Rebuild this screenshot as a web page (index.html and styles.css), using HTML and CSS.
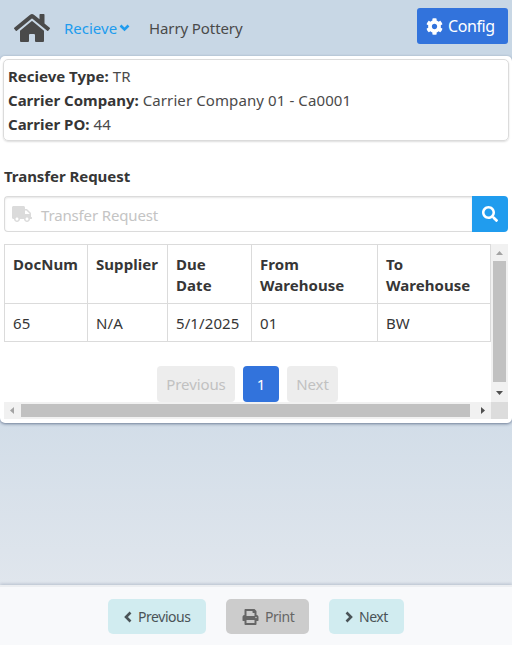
FILE: index.html
```html
<!DOCTYPE html>
<html lang="en">
<head>
<meta charset="utf-8">
<title>Recieve</title>
<link rel="stylesheet" href="styles.css">
</head>
<body>
<header class="navbar">
  <svg class="home" viewBox="0 0 576 512"><path d="M280.37 148.26L96 300.11V464a16 16 0 0 0 16 16l112.06-.29a16 16 0 0 0 15.92-16V368a16 16 0 0 1 16-16h64a16 16 0 0 1 16 16v95.64a16 16 0 0 0 16 16.05L464 480a16 16 0 0 0 16-16V300L295.67 148.26a12.19 12.19 0 0 0-15.3 0zM571.6 251.47L488 182.56V44.05a12 12 0 0 0-12-12h-56a12 12 0 0 0-12 12v72.61L318.47 43a48 48 0 0 0-61 0L4.34 251.47a12 12 0 0 0-1.6 16.9l25.5 31A12 12 0 0 0 45.15 301l235.22-193.74a12.19 12.19 0 0 1 15.3 0L530.9 301a12 12 0 0 0 16.9-1.6l25.5-31a12 12 0 0 0-1.7-16.93z"/></svg>
  <a class="menu"><span>Recieve</span><svg class="caret" viewBox="0 0 11 8"><path d="M1.5 1.5l4 4 4-4"/></svg></a>
  <span class="user">Harry Pottery</span>
  <button class="config"><svg viewBox="0 0 512 512"><path d="M487.4 315.7l-42.6-24.6c4.3-23.2 4.3-47 0-70.2l42.6-24.6c4.9-2.8 7.1-8.6 5.5-14-11.1-35.6-30-67.8-54.7-94.6-3.8-4.1-10-5.1-14.8-2.3L380.8 110c-17.9-15.4-38.5-27.3-60.8-35.1V25.8c0-5.6-3.9-10.5-9.4-11.7-36.7-8.2-74.3-7.8-109.2 0-5.5 1.2-9.4 6.1-9.4 11.7V75c-22.2 7.9-42.8 19.8-60.8 35.1L88.7 85.5c-4.9-2.8-11-1.9-14.8 2.3-24.7 26.7-43.6 58.9-54.7 94.6-1.7 5.4.6 11.2 5.5 14L67.3 221c-4.3 23.2-4.3 47 0 70.2l-42.6 24.6c-4.9 2.8-7.1 8.6-5.5 14 11.1 35.6 30 67.8 54.7 94.6 3.8 4.1 10 5.1 14.8 2.3l42.6-24.6c17.9 15.4 38.5 27.3 60.8 35.1v49.2c0 5.6 3.9 10.5 9.4 11.7 36.7 8.2 74.3 7.8 109.2 0 5.5-1.2 9.4-6.1 9.4-11.7v-49.2c22.2-7.9 42.8-19.8 60.8-35.1l42.6 24.6c4.9 2.8 11 1.9 14.8-2.3 24.7-26.7 43.6-58.9 54.7-94.6 1.5-5.5-.7-11.3-5.6-14.1zM256 336c-44.1 0-80-35.9-80-80s35.9-80 80-80 80 35.9 80 80-35.9 80-80 80z"/></svg><span>Config</span></button>
</header>
<main class="panel">
  <section class="info">
    <div><b>Recieve Type:</b> <span>TR</span></div>
    <div><b>Carrier Company:</b> <span>Carrier Company 01 - Ca0001</span></div>
    <div><b>Carrier PO:</b> <span>44</span></div>
  </section>
  <h2 class="label">Transfer Request</h2>
  <div class="search">
    <div class="field"><svg viewBox="0 0 640 512"><path d="M624 352h-16V243.9c0-12.7-5.1-24.9-14.1-33.9L494 110.1c-9-9-21.2-14.1-33.9-14.1H416V48c0-26.5-21.5-48-48-48H48C21.5 0 0 21.5 0 48v320c0 26.5 21.5 48 48 48h16c0 53 43 96 96 96s96-43 96-96h128c0 53 43 96 96 96s96-43 96-96h48c8.8 0 16-7.2 16-16v-32c0-8.8-7.2-16-16-16zM160 464c-26.5 0-48-21.5-48-48s21.5-48 48-48 48 21.5 48 48-21.5 48-48 48zm320 0c-26.5 0-48-21.5-48-48s21.5-48 48-48 48 21.5 48 48-21.5 48-48 48zm80-208H416V144h44.1l99.9 99.9V256z"/></svg><span>Transfer Request</span></div>
    <button class="go"><svg viewBox="0 0 512 512"><path d="M505 442.7L405.3 343c-4.5-4.5-10.6-7-17-7H372c27.6-35.3 44-79.7 44-128C416 93.1 322.9 0 208 0S0 93.1 0 208s93.1 208 208 208c48.3 0 92.7-16.4 128-44v16.3c0 6.4 2.5 12.5 7 17l99.7 99.7c9.4 9.4 24.6 9.4 33.9 0l28.3-28.3c9.4-9.4 9.4-24.6.1-34zM208 336c-70.7 0-128-57.2-128-128 0-70.7 57.2-128 128-128 70.7 0 128 57.2 128 128 0 70.7-57.2 128-128 128z"/></svg></button>
  </div>
  <div class="scroller">
    <div class="content">
      <table>
        <colgroup><col class="c1"><col class="c2"><col class="c3"><col class="c4"><col class="c5"></colgroup>
        <thead><tr><th>DocNum</th><th>Supplier</th><th>Due<br>Date</th><th>From<br>Warehouse</th><th>To<br>Warehouse</th></tr></thead>
        <tbody><tr><td>65</td><td>N/A</td><td>5/1/2025</td><td>01</td><td>BW</td></tr></tbody>
      </table>
      <nav class="pages"><span class="page prev">Previous</span><span class="page current">1</span><span class="page next">Next</span></nav>
    </div>
    <div class="vbar"><svg viewBox="0 0 17 17"><path class="dim" d="M5 11l3.5-4 3.5 4z"/></svg><i></i><svg viewBox="0 0 17 17"><path d="M5 6h7L8.500 10z"/></svg></div>
    <div class="hbar"><svg viewBox="0 0 17 17"><path class="dim" d="M10 5v7L6 8.500z"/></svg><i></i><svg viewBox="0 0 17 17"><path d="M7 5v7l4-3.500z"/></svg></div>
    <div class="corner"></div>
  </div>
</main>
<footer class="footer">
  <button class="step back"><svg class="chev" viewBox="0 0 8 12"><path d="M6.500 1.500L2 6l4.500 4.500"/></svg><span>Previous</span></button>
  <button class="step print"><svg class="printer" viewBox="0 0 512 512"><path d="M448 192V77.250c0-8.490-3.370-16.620-9.370-22.630L393.370 9.370c-6-6-14.140-9.370-22.630-9.370H96C78.330 0 64 14.330 64 32v160c-35.350 0-64 28.650-64 64v112c0 8.840 7.160 16 16 16h48v96c0 17.670 14.330 32 32 32h320c17.670 0 32-14.330 32-32v-96h48c8.840 0 16-7.160 16-16V256c0-35.350-28.650-64-64-64zm-64 256H128v-96h256v96zm0-224H128V64h192v48c0 8.840 7.160 16 16 16h48v96zm48 72c-13.250 0-24-10.750-24-24 0-13.260 10.750-24 24-24s24 10.740 24 24c0 13.250-10.750 24-24 24z"/></svg><span>Print</span></button>
  <button class="step forward"><svg class="chev" viewBox="0 0 8 12"><path d="M1.500 1.500L6 6l-4.500 4.500"/></svg><span>Next</span></button>
</footer>
</body>
</html>
```
FILE: styles.css
```css
* { box-sizing: border-box; }
html, body { height: 100%; }
body {
  margin: 0;
  display: flex;
  flex-direction: column;
  font: 15px/24px "Noto Sans", sans-serif;
  letter-spacing: -0.1px;
  color: #4a4a4a;
  background: linear-gradient(#c8d7e5, #c8d7e5 56px, #d2dde8 423px, #e0e6ed 585px);
  overflow: hidden;
}
svg { display: block; flex: none; fill: currentColor; }
button { font: inherit; letter-spacing: inherit; border: 0; padding: 0; display: flex; align-items: center; }
b, th, h2 { color: #363636; font-weight: 700; }

.navbar { height: 56px; flex: none; display: flex; align-items: center; padding: 0 4px 0 14px; background: #c8d7e5; }
.home { width: 36px; height: 32px; margin-right: 14px; }
.menu { display: flex; align-items: center; color: #209cee; width: 85px; gap: 2px; }
.menu span { letter-spacing: 0; }
.caret { width: 11px; height: 8px; }
.caret path, .chev path { fill: none; stroke: currentColor; stroke-width: 2.600; }
.config { width: 91px; height: 36px; margin: -4px 0 0 auto; padding-left: 9px; gap: 5px; border-radius: 3px; background: #3273dc; color: #fff; font-size: 16px; letter-spacing: -0.4px; }
.config svg { width: 17px; height: 17px; }

.panel { height: 367px; flex: none; padding: 3px 4px 4px; border-radius: 5px; background: #fff; box-shadow: 0 1px 3px #0a1e4680; }
.info { height: 82px; padding: 4px 4px; margin: 0 -1px; border: 1px solid #dbdbdb; border-radius: 5px; box-shadow: 0 1px 2px #0002; letter-spacing: 0.1px; }
.info b { letter-spacing: 0; }
.label { margin: 23px 0 8px; font-size: 15px; line-height: 24px; letter-spacing: -0.05px; }
.search { display: flex; height: 36px; margin-bottom: 12px; }
.field { flex: 1; display: flex; align-items: center; gap: 9px; padding: 2px 7px 0; border: 1px solid #dbdbdb; border-right: 0; border-radius: 4px 0 0 4px; box-shadow: inset 0 1px 2px #0a0a0a1a; color: #c4c4c4; letter-spacing: -0.15px; }
.field svg { width: 20px; height: 16px; margin-top: -3px; color: #dbdbdb; }
.go { width: 36px; justify-content: center; background: #209cee; color: #fff; border-radius: 0 4px 4px 0; }
.go svg { width: 16px; height: 16px; }

.scroller { display: grid; grid-template: 158px 17px / 487px 17px; }
.content { overflow: hidden; }
table { width: 487px; table-layout: fixed; border-collapse: collapse; }
.c1 { width: 83px; } .c2 { width: 80px; } .c3 { width: 84px; } .c4 { width: 126px; } .c5 { width: 113px; }
th, td { border: 1px solid #dbdbdb; padding: 9px 8px 7px; text-align: left; vertical-align: top; line-height: 21px; color: #363636; white-space: nowrap; }
th { letter-spacing: 0.05px; }
td { letter-spacing: 0.1px; }
thead tr { height: 59px; }
tbody tr { height: 38px; }
.pages { display: flex; justify-content: center; gap: 8px; margin-top: 24px; }
.page { height: 36px; border-radius: 4px; background: #ededed; color: #c1c1c1; text-align: center; line-height: 37px; }
.prev { width: 78px; }
.page.current { width: 36px; background: #3273dc; color: #fff; }
.next { width: 51px; }
.vbar, .hbar { display: flex; background: #f1f1f1; color: #505050; }
.vbar { flex-direction: column; }
.vbar svg, .hbar svg { width: 17px; height: 17px; }
.vbar i { width: 13px; height: 121px; margin: 0 2px auto; background: #c1c1c1; }
.hbar i { width: 449px; height: 13px; margin: 2px auto 2px 0; background: #c1c1c1; }
.dim { fill: #a3a3a3; }
.corner { background: #dcdcdc; }

.footer { height: 60px; margin-top: auto; display: flex; justify-content: center; align-items: flex-start; gap: 20px; padding-top: 12px; background: #f8f9fb; border-top: 2px solid #eceef1; box-shadow: 0 -1px 3px #0a1e4633; }
.step { height: 35px; border-radius: 5px; background: #d1ecf0; color: #4a5357; padding-left: 16px; gap: 6px; font-size: 14px; letter-spacing: -0.45px; }
.step span { padding-top: 1px; }
.chev { width: 8px; height: 12px; }
.back { width: 98px; }
.print { width: 83px; background: #ccc; color: #666; }
.printer { width: 17px; height: 16px; }
.forward { width: 75px; }
```
